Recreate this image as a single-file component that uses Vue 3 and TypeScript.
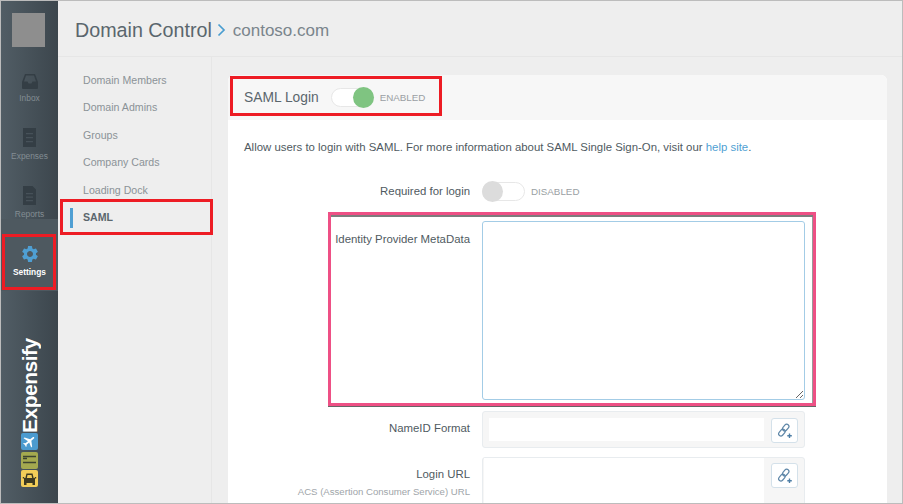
<script setup lang="ts">
const navItems = ['Domain Members', 'Domain Admins', 'Groups', 'Company Cards', 'Loading Dock', 'SAML'];
const gear = 'M19.14 12.94c.04-.3.06-.61.06-.94 0-.32-.02-.64-.07-.94l2.03-1.58a.49.49 0 0 0 .12-.61l-1.92-3.32a.488.488 0 0 0-.59-.22l-2.39.96c-.5-.38-1.03-.7-1.62-.94l-.36-2.54a.484.484 0 0 0-.48-.41h-3.84c-.24 0-.43.17-.47.41l-.36 2.54c-.59.24-1.13.57-1.62.94l-2.39-.96c-.22-.08-.47 0-.59.22L2.74 8.87c-.12.21-.08.47.12.61l2.03 1.58c-.05.3-.09.63-.09.94s.02.64.07.94l-2.03 1.58a.49.49 0 0 0-.12.61l1.92 3.32c.12.22.37.29.59.22l2.39-.96c.5.38 1.03.7 1.62.94l.36 2.54c.05.24.24.41.48.41h3.84c.24 0 .44-.17.47-.41l.36-2.54c.59-.24 1.13-.56 1.62-.94l2.39.96c.22.08.47 0 .59-.22l1.92-3.32c.12-.22.07-.47-.12-.61l-2.01-1.58zM12 15.6c-1.98 0-3.6-1.62-3.6-3.6s1.62-3.6 3.6-3.6 3.6 1.62 3.6 3.6-1.62 3.6-3.6 3.6z';
</script>

<template>
  <div class="frame">
    <aside class="sidebar">
      <div class="avatar"></div>
      <div class="side-item inbox">
        <svg width="16" height="16" viewBox="0 0 16 16"><path d="M3 1h10l3 8v6a1 1 0 0 1-1 1H1a1 1 0 0 1-1-1V9zM4 2.5 2 8.5h3.5l1 2h3l1-2H14l-2-6z" fill="#343e45" fill-rule="evenodd" /></svg>
        <span>Inbox</span>
      </div>
      <div class="side-item">
        <svg width="13" height="19" viewBox="0 0 13 19"><path d="M0 0h13v19H0zM3 5v1.2h7V5zM3 9v1.2h7V9zM3 13v1.2h7V13z" fill="#343e45" fill-rule="evenodd" /></svg>
        <span>Expenses</span>
      </div>
      <div class="side-item">
        <svg width="13" height="19" viewBox="0 0 13 19"><path d="M0 0h9.5L13 3.5V19H0zM3 7v1.2h7V7zM3 10.5v1.2h7v-1.2zM3 14v1.2h7V14z" fill="#343e45" fill-rule="evenodd" /></svg>
        <span>Reports</span>
      </div>
      <div class="side-item active">
        <svg width="20" height="20" viewBox="0 0 24 24"><path :d="gear" fill="#4f9fd3" /></svg>
        <span>Settings</span>
      </div>
      <div class="logo">
        <div class="wordmark">Expensify</div>
        <div class="tile plane">
          <svg width="15" height="15" viewBox="0 0 24 24"><path transform="rotate(50 12 12)" d="M21 16v-2l-8-5V3.5c0-.83-.67-1.5-1.5-1.5S10 2.67 10 3.5V9l-8 5v2l8-2.5V19l-2 1.5V22l3.5-1 3.5 1v-1.5L13 19v-5.5l8 2.5z" fill="#fff" /></svg>
        </div>
        <div class="tile food">
          <svg width="15" height="15" viewBox="0 0 15 15"><path d="M1 3.5h13M1 5.5h4M1 9.5h13" stroke="#3d4430" stroke-width="1.6" fill="none" /></svg>
        </div>
        <div class="tile taxi">
          <svg width="15" height="15" viewBox="0 0 15 15"><path d="M4 7.5 5 3.2h5L11 7.5" stroke="#3d3a22" stroke-width="1.4" fill="none" /><path d="M2 7h11v5H2zM2 12h2.5v2H2zM10.5 12H13v2h-2.5zM0.8 6h1.4v1.6H0.8zM12.8 6h1.4v1.6h-1.4z" fill="#3d3a22" /></svg>
        </div>
      </div>
    </aside>

    <div class="main">
      <header class="topbar">
        <h1>Domain Control</h1>
        <svg class="crumb" width="9" height="14" viewBox="0 0 9 14"><path d="M1.5 1.5 7 7l-5.5 5.5" stroke="#4a9dd0" stroke-width="1.7" fill="none" /></svg>
        <span class="domain">contoso.com</span>
      </header>

      <div class="columns">
        <nav class="subnav">
          <div v-for="item in navItems" :key="item" class="nav-item" :class="{ current: item === 'SAML' }">{{ item }}</div>
        </nav>

        <section class="content">
          <div class="card">
            <div class="card-head">
              <span class="card-title">SAML Login</span>
              <span class="toggle on"><i></i></span>
              <span class="state">ENABLED</span>
            </div>

            <div class="card-body">
              <p class="intro">Allow users to login with SAML. For more information about SAML Single Sign-On, visit our <a>help site</a>.</p>

              <div class="row required">
                <label>Required for login</label>
                <div class="toggle-line">
                  <span class="toggle"><i></i></span>
                  <span class="state">DISABLED</span>
                </div>
              </div>

              <div class="row meta">
                <label>Identity Provider MetaData</label>
                <textarea></textarea>
              </div>

              <div class="row nameid">
                <label>NameID Format</label>
                <div class="field">
                  <div class="field-input"></div>
                  <button class="link-btn">
                    <svg width="16" height="16" viewBox="0 0 16 16"><g fill="none" stroke="#5f87a8" stroke-width="1.2"><rect x="6.5" y="0.8" width="4.4" height="7.6" rx="2.2" transform="rotate(40 8.7 4.6)" /><rect x="2.7" y="5.8" width="4.4" height="7.6" rx="2.2" transform="rotate(40 4.9 9.6)" /></g><path d="M12.5 10.5v4.5M10.3 12.8h4.5" stroke="#4d7ea6" stroke-width="1.4" /></svg>
                  </button>
                </div>
              </div>

              <div class="row login">
                <div class="label-stack">
                  <label>Login URL</label>
                  <small>ACS (Assertion Consumer Service) URL</small>
                </div>
                <div class="field tall">
                  <div class="field-input"></div>
                  <button class="link-btn">
                    <svg width="16" height="16" viewBox="0 0 16 16"><g fill="none" stroke="#5f87a8" stroke-width="1.2"><rect x="6.5" y="0.8" width="4.4" height="7.6" rx="2.2" transform="rotate(40 8.7 4.6)" /><rect x="2.7" y="5.8" width="4.4" height="7.6" rx="2.2" transform="rotate(40 4.9 9.6)" /></g><path d="M12.5 10.5v4.5M10.3 12.8h4.5" stroke="#4d7ea6" stroke-width="1.4" /></svg>
                  </button>
                </div>
              </div>
            </div>
          </div>
        </section>
      </div>
    </div>

    <div class="mark mark-settings"></div>
    <div class="mark mark-nav"></div>
    <div class="mark mark-head"></div>
    <div class="mark-pink"></div>
  </div>
</template>

<style scoped>
.frame {
  position: relative;
  display: flex;
  width: 903px;
  height: 504px;
  box-sizing: border-box;
  border: 1px solid #bcbcbc;
  overflow: hidden;
  background: #eeeeee;
  font-family: "Liberation Sans", Arial, sans-serif;
  color: #5b666d;
}

.sidebar {
  display: flex;
  flex-direction: column;
  flex: 0 0 57px;
  background: linear-gradient(90deg, #515d65, #3c464d);
}

.avatar {
  width: 33px;
  height: 34px;
  margin: 12px 0 0 11px;
  background: #8e8e8e;
}

.side-item {
  display: flex;
  flex-direction: column;
  align-items: center;
  justify-content: flex-end;
  height: 58px;
  font-size: 8.4px;
  color: #838d93;
}

.side-item svg {
  margin-bottom: 4px;
}

.side-item.inbox {
  height: 56px;
}

.side-item.active {
  padding-bottom: 14px;
  margin-bottom: -14px;
  color: #fff;
  font-weight: bold;
  background: #4e5960;
}

.side-item.active svg {
  margin-bottom: 3px;
}

.logo {
  display: flex;
  flex-direction: column;
  align-items: center;
  margin: 60px 0 0;
}

.wordmark {
  writing-mode: vertical-rl;
  transform: rotate(180deg);
  height: 96px;
  font-size: 21px;
  font-weight: bold;
  line-height: 24px;
  color: #fff;
  letter-spacing: -0.5px;
}

.tile {
  display: flex;
  align-items: center;
  justify-content: center;
  width: 17px;
  height: 17px;
  margin-bottom: 1.5px;
  border-radius: 2px;
}

.plane { background: #4c9bcf; }
.food { background: #a4a94f; }
.taxi { background: #f2cd58; }

.main {
  display: flex;
  flex-direction: column;
  flex: 1;
  min-width: 0;
}

.topbar {
  display: flex;
  align-items: center;
  flex: 0 0 56px;
  padding: 3px 0 0 17px;
  box-sizing: border-box;
  border-bottom: 1px solid #e6e6e6;
}

.topbar h1 {
  margin: 0;
  font-size: 19.7px;
  font-weight: normal;
  color: #5a666d;
}

.crumb {
  margin: 0 7px 0 5px;
}

.domain {
  font-size: 17px;
  color: #7a858c;
  margin-top: 1px;
}

.columns {
  display: flex;
  flex: 1;
  min-height: 0;
}

.subnav {
  flex: 0 0 154px;
  box-sizing: border-box;
  padding-top: 9.5px;
  border-right: 1px solid #e6e6e6;
}

.nav-item {
  position: relative;
  height: 27.5px;
  padding-left: 25px;
  line-height: 27.5px;
  font-size: 10.6px;
  color: #8b9297;
}

.nav-item.current {
  font-weight: bold;
  color: #5b666d;
}

.nav-item.current::before {
  content: "";
  position: absolute;
  left: 12px;
  top: 4px;
  width: 2.5px;
  height: 20px;
  background: #4f9fd3;
}

.content {
  flex: 1;
  padding: 18px 15px 0 16px;
  min-width: 0;
}

.card {
  border-radius: 6px 6px 0 0;
  background: #fff;
  height: 600px;
  overflow: hidden;
}

.card-head {
  display: flex;
  align-items: center;
  height: 45px;
  padding-left: 16px;
  box-sizing: border-box;
  background: #f7f7f7;
}

.card-title {
  font-size: 13.8px;
  margin-right: 12px;
}

.toggle {
  position: relative;
  display: inline-block;
  width: 41px;
  height: 17px;
  border: 1px solid #e7e7e7;
  border-radius: 10px;
  background: #fff;
  margin-right: 6px;
}

.toggle i {
  position: absolute;
  left: -1px;
  top: -2px;
  width: 21px;
  height: 21px;
  border-radius: 50%;
  background: #dcdcdc;
}

.toggle.on i {
  left: auto;
  right: -1px;
  background: #7fc481;
}

.state {
  font-size: 9.8px;
  color: #9a9fa3;
}

.card-body {
  padding: 0 0 0 16px;
}

.intro {
  margin: 0;
  padding-top: 20px;
  font-size: 11.4px;
  line-height: 14px;
  color: #4f5a61;
}

.intro a {
  color: #4f9fd3;
}

.row {
  display: flex;
  margin-left: -16px;
}

.row label {
  display: block;
  font-size: 11.4px;
  color: #4f5a61;
}

.row > label,
.label-stack {
  flex: 0 0 242px;
  text-align: right;
  margin-right: 12px;
}

.required {
  align-items: center;
  margin-top: 26px;
  height: 22px;
}

.toggle-line {
  display: flex;
  align-items: center;
}

.meta {
  margin-top: 19px;
}

.meta label {
  margin-top: 12px;
}

textarea {
  display: block;
  width: 323px;
  height: 179px;
  box-sizing: border-box;
  border: 1px solid #a3cce6;
  border-radius: 3px;
  background: #fff;
  resize: vertical;
  outline: none;
}

.nameid {
  margin-top: 11px;
  align-items: center;
}

.nameid label {
  margin-bottom: 3px;
}

.field {
  display: flex;
  width: 323px;
  height: 37px;
  box-sizing: border-box;
  padding: 6px;
  border: 1px solid #e8ecef;
  border-radius: 3px;
  background: #f6f6f6;
}

.field-input {
  flex: 1;
  margin-right: 7px;
  background: #fff;
}

.field.tall {
  height: 70px;
  padding: 0 6px 0 1px;
}

.link-btn {
  display: flex;
  align-items: center;
  justify-content: center;
  width: 27px;
  height: 25px;
  padding: 0;
  box-sizing: border-box;
  border: 1px solid #d4e1ea;
  border-radius: 3px;
  background: #fff;
}

.tall .link-btn {
  margin-top: 5px;
}

.login {
  margin-top: 9px;
}

.label-stack {
  padding-top: 11px;
}

.label-stack small {
  display: block;
  margin-top: 6px;
  font-size: 9.6px;
  color: #a0a5a9;
}

.mark {
  position: absolute;
  box-sizing: border-box;
  border: 3px solid #ed1c24;
}

.mark-settings {
  left: 1px;
  top: 233px;
  width: 54px;
  height: 56px;
}

.mark-nav {
  left: 59px;
  top: 198px;
  width: 153px;
  height: 36px;
}

.mark-head {
  left: 229px;
  top: 75px;
  width: 212px;
  height: 40px;
}

.mark-pink {
  position: absolute;
  left: 327px;
  top: 211px;
  width: 488px;
  height: 194px;
  box-sizing: border-box;
  border: 3px solid #ee5085;
  box-shadow: 0 1px 0 #666, inset 0 2px 0 #7d7d7d, inset -1px 0 0 #9a9a9a;
  pointer-events: none;
}
</style>

<style>
html, body {
  margin: 0;
  overflow: hidden;
}
</style>
